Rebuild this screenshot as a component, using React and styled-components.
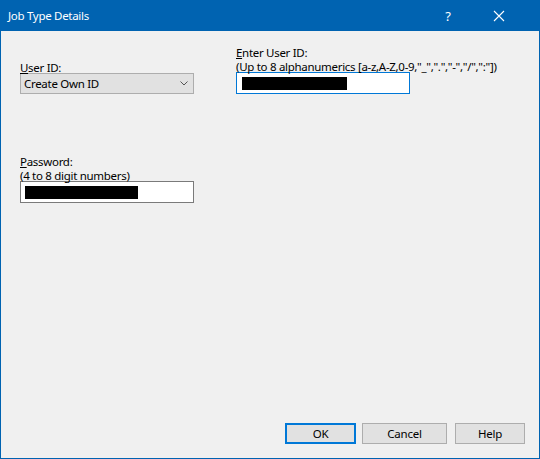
import styled, { createGlobalStyle } from "styled-components";

const Global = createGlobalStyle`
  html, body, #root { margin: 0; padding: 0; height: 100%; }
  body { font-family: "Noto Sans", "Liberation Sans", sans-serif; font-size: 11.5px; }
`;

const Window = styled.div`
  box-sizing: border-box;
  width: 540px;
  height: 459px;
  display: flex;
  flex-direction: column;
  background: #f0f0f0;
  border: 1px solid #0063b1;
  border-top: none;
`;

const TitleBar = styled.div`
  height: 31px;
  margin: 0 -1px;
  background: #0063b1;
  color: #fff;
  display: flex;
  align-items: center;
  padding-left: 8px;
  font-size: 11.5px;
`;

const Title = styled.span`
  flex: 1;
  letter-spacing: -0.3px;
`;

const TitleButton = styled.div`
  width: ${(p) => p.w}px;
  height: 31px;
  display: flex;
  align-items: center;
  justify-content: center;
  font-size: 13px;
`;

const Body = styled.div`
  flex: 1;
  padding: 12px 0 0 19px;
  display: grid;
  grid-template-columns: 174px 174px;
  column-gap: 42px;
  align-content: start;
  align-items: end;
`;

const Field = styled.div`
  display: flex;
  flex-direction: column;
  margin-top: ${(p) => p.top || 0}px;
`;

/* Noto Sans sits high in its line box; push the glyphs down toward the box below */
const Labels = styled.div`
  padding-top: 3px;
  margin-bottom: -2px;
  position: relative;
  z-index: 1;
`;

const Label = styled.div`
  color: #000;
  line-height: 14px;
  white-space: nowrap;
  letter-spacing: -0.3px;
`;

const Key = styled.span`
  text-decoration: underline;
  text-underline-offset: 1px;
`;

const Combo = styled.div`
  box-sizing: border-box;
  height: 21px;
  background: #e1e1e1;
  border: 1px solid #adadad;
  display: flex;
  align-items: center;
  padding: 0 5px 0 3px;
  justify-content: space-between;
  letter-spacing: -0.3px;
`;

const TextBox = styled.div`
  box-sizing: border-box;
  height: 22px;
  background: #fff;
  border: 1px solid ${(p) => (p.focused ? "#0078d7" : "#7a7a7a")};
  display: flex;
  align-items: center;
  padding-left: ${(p) => p.pad}px;
`;

const Redacted = styled.div`
  height: 13px;
  background: #000;
`;

const Footer = styled.div`
  display: flex;
  justify-content: flex-end;
  padding: 0 14px 14px 0;
  gap: 6px;
`;

const Button = styled.button`
  box-sizing: border-box;
  height: 21px;
  width: ${(p) => p.w}px;
  margin-left: ${(p) => p.ml || 0}px;
  background: #e1e1e1;
  border: ${(p) => (p.primary ? "2px solid #0078d7" : "1px solid #adadad")};
  font-family: inherit;
  font-size: 11.5px;
  color: #000;
  padding: 0;
  letter-spacing: -0.2px;
`;

export default function App() {
  return (
    <>
      <Global />
      <Window>
        <TitleBar>
          <Title>Job Type Details</Title>
          <TitleButton w={20}>?</TitleButton>
          <TitleButton w={82}>
            <svg width="12" height="12" viewBox="0 0 12 12">
              <path d="M1 1L11 11M11 1L1 11" stroke="#fff" strokeWidth="1.1" />
            </svg>
          </TitleButton>
        </TitleBar>
        <Body>
          <Field>
            <Labels>
              <Label>
                <Key>U</Key>ser ID:
              </Label>
            </Labels>
            <Combo>
              <span>Create Own ID</span>
              <svg width="8" height="5" viewBox="0 0 8 5">
                <path d="M0.5 0.5L4 4L7.5 0.5" stroke="#555" strokeWidth="1" fill="none" />
              </svg>
            </Combo>
          </Field>
          <Field>
            <Labels>
              <Label>
                <Key>E</Key>nter User ID:
              </Label>
              <Label>(Up to 8 alphanumerics [a-z,A-Z,0-9,"_",".","-","/",":"])</Label>
            </Labels>
            <TextBox focused pad={5}>
              <Redacted style={{ width: 105 }} />
            </TextBox>
          </Field>
          <Field top={58}>
            <Labels>
              <Label>
                <Key>P</Key>assword:
              </Label>
              <Label>(4 to 8 digit numbers)</Label>
            </Labels>
            <TextBox pad={4}>
              <Redacted style={{ width: 113 }} />
            </TextBox>
          </Field>
        </Body>
        <Footer>
          <Button primary w={71}>OK</Button>
          <Button w={85}>Cancel</Button>
          <Button w={70} ml={2}>Help</Button>
        </Footer>
      </Window>
    </>
  );
}
